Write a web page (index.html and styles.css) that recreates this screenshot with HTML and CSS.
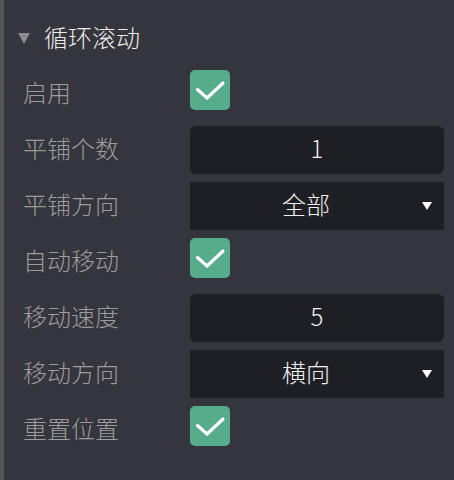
FILE: index.html
```html
<!DOCTYPE html>
<html lang="zh">
<head>
<meta charset="utf-8">
<link rel="stylesheet" href="styles.css">
</head>
<body>
<div class="panel">
  <div class="header">
    <svg class="caret" width="12" height="11" viewBox="0 0 12 11"><polygon points="0,0 12,0 6,11" fill="#8a8a90"/></svg>
    <span class="title">循环滚动</span>
  </div>
  <div class="rows">
    <div class="row">
      <span class="label">启用</span>
      <div class="field top"><span class="check"><svg width="40" height="40" viewBox="0 0 40 40"><polyline points="7.5,19.5 17,28 33,13" fill="none" stroke="#fff" stroke-width="3.2" stroke-linecap="round" stroke-linejoin="round"/></svg></span></div>
    </div>
    <div class="row">
      <span class="label">平铺个数</span>
      <div class="field"><div class="input">1</div></div>
    </div>
    <div class="row">
      <span class="label">平铺方向</span>
      <div class="field"><div class="select"><span class="sel-text">全部</span><svg class="arrow" width="10" height="8" viewBox="0 0 10 8"><polygon points="0,0 10,0 5,8" fill="#fff"/></svg></div></div>
    </div>
    <div class="row">
      <span class="label">自动移动</span>
      <div class="field top"><span class="check"><svg width="40" height="40" viewBox="0 0 40 40"><polyline points="7.5,19.5 17,28 33,13" fill="none" stroke="#fff" stroke-width="3.2" stroke-linecap="round" stroke-linejoin="round"/></svg></span></div>
    </div>
    <div class="row">
      <span class="label">移动速度</span>
      <div class="field"><div class="input">5</div></div>
    </div>
    <div class="row">
      <span class="label">移动方向</span>
      <div class="field"><div class="select"><span class="sel-text">横向</span><svg class="arrow" width="10" height="8" viewBox="0 0 10 8"><polygon points="0,0 10,0 5,8" fill="#fff"/></svg></div></div>
    </div>
    <div class="row">
      <span class="label">重置位置</span>
      <div class="field top"><span class="check"><svg width="40" height="40" viewBox="0 0 40 40"><polyline points="7.5,19.5 17,28 33,13" fill="none" stroke="#fff" stroke-width="3.2" stroke-linecap="round" stroke-linejoin="round"/></svg></span></div>
    </div>
  </div>
</div>
</body>
</html>
```
FILE: styles.css
```css
html, body {
  margin: 0;
  padding: 0;
  background: #35353d;
}
body {
  width: 454px;
  height: 480px;
  overflow: hidden;
  font-family: "Noto Sans CJK SC", "Noto Sans", sans-serif;
  font-weight: 300;
}
.panel {
  box-sizing: border-box;
  height: 480px;
  border-left: 4px solid #55565b;
  background: #35353d;
  padding: 22px 10px 0 19px;
}
.header {
  display: flex;
  align-items: center;
  height: 32px;
  margin-bottom: 16px;
}
.caret {
  margin-left: -5px;
  margin-right: 14px;
}
.title {
  font-size: 24px;
  line-height: 32px;
  padding-bottom: 3px;
  color: #ececec;
}
.rows {
  display: flex;
  flex-direction: column;
  gap: 8px;
}
.row {
  display: flex;
  align-items: center;
  height: 48px;
}
.label {
  width: 167px;
  font-size: 24px;
  line-height: 32px;
  padding-bottom: 4px;
  color: #9c9c9f;
}
.field {
  flex: 1;
  height: 48px;
  display: flex;
  align-items: center;
}
.field.top {
  align-items: flex-start;
}
.check {
  width: 40px;
  height: 40px;
  border-radius: 5px;
  background: #55ad8c;
  display: block;
}
.check svg {
  display: block;
}
.input {
  box-sizing: border-box;
  width: 100%;
  height: 48px;
  border-radius: 6px;
  background: #1e1f24;
  color: #f0f0f0;
  font-size: 24px;
  line-height: 44px;
  padding-bottom: 4px;
  text-align: center;
}
.select {
  box-sizing: border-box;
  width: 100%;
  height: 48px;
  background: #1e1f24;
  display: flex;
  align-items: center;
  padding-right: 12px;
}
.sel-text {
  flex: 1;
  text-align: center;
  font-size: 24px;
  line-height: 44px;
  padding-bottom: 4px;
  color: #f0f0f0;
}
.arrow {
  display: block;
}
```
